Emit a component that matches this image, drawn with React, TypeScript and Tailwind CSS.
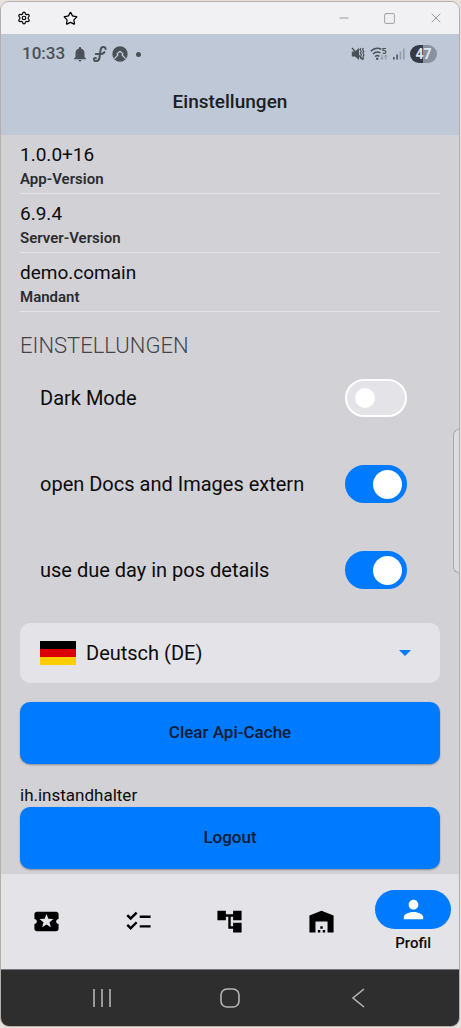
import { useState } from "react";
import { Minus, Settings, Square, Star, X } from "lucide-react";
import {
  MdAccountTree,
  MdChecklist,
  MdLocalActivity,
  MdNotifications,
  MdPerson,
  MdWarehouse,
} from "react-icons/md";

const infos = [
  { value: "1.0.0+16", label: "App-Version" },
  { value: "6.9.4", label: "Server-Version" },
  { value: "demo.comain", label: "Mandant" },
];

const options = [
  { id: "dark-mode", label: "Dark Mode", enabled: false },
  { id: "open-extern", label: "open Docs and Images extern", enabled: true },
  { id: "due-day", label: "use due day in pos details", enabled: true },
];

const tabs = [
  { name: "Tickets", icon: MdLocalActivity },
  { name: "Aufgaben", icon: MdChecklist },
  { name: "Struktur", icon: MdAccountTree },
  { name: "Lager", icon: MdWarehouse },
  { name: "Profil", icon: MdPerson },
];

function TitleBar() {
  return (
    <div className="flex h-8 items-center justify-between bg-[#f1f0f2] pr-[15px] pl-4">
      <div className="flex items-center gap-8 text-black">
        <button aria-label="Settings">
          <Settings size={14} strokeWidth={2} />
        </button>
        <button aria-label="Favorite">
          <Star size={15} strokeWidth={2} />
        </button>
      </div>
      <div className="flex items-center gap-8 text-[#99979a]">
        <button aria-label="Minimize">
          <Minus size={14} strokeWidth={1.7} />
        </button>
        <button aria-label="Maximize">
          <Square size={13} strokeWidth={1.7} />
        </button>
        <button aria-label="Close">
          <X size={16} strokeWidth={1.5} />
        </button>
      </div>
    </div>
  );
}

function StatusBar() {
  return (
    <div className="flex h-10 items-center justify-between pr-[22px] pl-[21px] text-[#4a5157]">
      <div className="flex items-center">
        <span className="text-[17px] font-medium">10:33</span>
        <MdNotifications size={18} className="ml-1.5" />
        <svg width="16" height="18" viewBox="0 0 16 18" className="ml-[3px]" fill="none" stroke="currentColor" strokeWidth="2" strokeLinecap="round">
          <path d="M13.6 4C13.3 1.4 9.2 1.2 8.6 4.8L7.4 13c-.5 3.6-4.6 3.8-5.4 1.8-.4-1.3.7-2.3 1.9-1.7" />
          <path d="M3.8 8.9h5c2 0 3.2-.7 3.6-1.8" />
        </svg>
        <svg width="16" height="16" viewBox="0 0 16 16" className="ml-1">
          <circle cx="8" cy="8" r="7.7" fill="currentColor" />
          <path d="M2.4 12.6L5.8 9.2 5.2 7.6 8 5.4l2.8 2.2-.6 1.6 3.4 3.4" fill="none" stroke="#bfc8d7" strokeWidth="1.3" />
          <path d="M4.4 13.8L8 9.8l3.6 4L8 15.5z" fill="currentColor" />
        </svg>
        <span className="ml-2 size-[5px] rounded-full bg-current" />
      </div>
      <div className="flex items-center gap-[5px]">
        <svg width="14" height="14" viewBox="0 0 14 14" fill="none" stroke="currentColor">
          <path d="M.8 4.5H4L8 1v12L4 9.5H.8z" fill="currentColor" stroke="none" />
          <path d="M1 1l11 12" strokeWidth="1.3" />
          <path d="M10 1l-1 1.5 1.3 2L9.4 6l1 2-1 2 .8 2M12.5 1l-1 1.5 1.3 2-.9 1.5 1 2-1 2 .8 2" strokeWidth="1.2" />
        </svg>
        <svg width="18" height="14" viewBox="0 0 18 14" fill="none" stroke="currentColor">
          <path d="M.8 4.3C3.7 1.3 8 .7 11.4 2.3M3 7c2-2 5-2.4 7.4-1.1M5.2 9.6c1.2-1.2 3-1.2 4.2-.2" strokeWidth="1.5" />
          <circle cx="7.2" cy="11.8" r="1.2" fill="currentColor" stroke="none" />
          <path d="M16 1.5h-3v2h1.4c2 0 2 2.8 0 2.8H12.8" strokeWidth="1.2" />
          <path d="M12 7.8v4.4m-1.4-1.4L12 12.3l1.4-1.5M15.8 12.5V8.2m-1.4 1.4l1.4-1.5 1.4 1.5" stroke="#8b929f" />
        </svg>
        <svg width="12" height="14" viewBox="0 0 12 14" fill="currentColor">
          <path d="M0 10h1.6v2.6H0zM3.3 7.5h1.6v5.1H3.3z" />
          <path d="M6.6 4.6h1.6v8H6.6zM10 1.5h1.6v11.1H10z" fill="#929aa8" />
        </svg>
        <span className="flex h-[18px] w-[27px] items-center justify-center rounded-full bg-linear-to-r from-[#363a42] from-47% to-[#8991a0] to-47% text-sm font-bold text-[#dde4ee]">
          47
        </span>
      </div>
    </div>
  );
}

function Toggle({ id, label, enabled }: { id: string; label: string; enabled: boolean }) {
  const [checked, setChecked] = useState(enabled);

  return (
    <div className="flex h-[86px] items-center justify-between pr-[33px] pl-5">
      <label htmlFor={id} className="text-xl">
        {label}
      </label>
      <input
        id={id}
        type="checkbox"
        role="switch"
        checked={checked}
        onChange={() => setChecked(!checked)}
        className="flex h-[38px] w-[62px] shrink-0 appearance-none items-center rounded-full border-2 border-white bg-[#e4e3e8] px-2 before:size-5 before:rounded-full before:bg-white checked:justify-end checked:border-[#007aff] checked:bg-[#007aff] checked:px-[3px] checked:before:size-[29px]"
      />
    </div>
  );
}

function LanguageSelect() {
  return (
    <div className="mt-2.5 flex h-[60px] items-center rounded-[10px] bg-[#e4e3e8] pr-[29px] pl-5">
      <svg width="36" height="24" viewBox="0 0 36 24" aria-hidden="true">
        <path d="M0 0h36v8H0z" fill="#000" />
        <path d="M0 8h36v8H0z" fill="#dd0000" />
        <path d="M0 16h36v8H0z" fill="#ffce00" />
      </svg>
      <select aria-label="Sprache" className="ml-2.5 h-full flex-1 appearance-none text-xl">
        <option>Deutsch (DE)</option>
        <option>English (EN)</option>
      </select>
      <svg width="12" height="6" viewBox="0 0 12 6" aria-hidden="true">
        <path d="M0 0h12L6 6z" fill="#007aff" />
      </svg>
    </div>
  );
}

function ActionButton({ children }: { children: string }) {
  return (
    <button className="h-[62px] w-full rounded-[10px] bg-[#007aff] text-[17px] font-medium text-[#0a1c33] shadow-[0_1px_2px_rgba(0,0,0,0.35)]">
      {children}
    </button>
  );
}

function TabBar() {
  const [active, setActive] = useState("Profil");

  return (
    <nav className="grid h-[95px] grid-cols-5 items-center bg-[#e4e3e8]">
      {tabs.map(({ name, icon: Icon }) => (
        <button
          key={name}
          aria-label={name}
          onClick={() => setActive(name)}
          className="flex flex-col items-center"
        >
          <span
            className={`flex h-[39px] w-[76px] items-center justify-center rounded-full ${
              name === active ? "bg-[#007aff] text-white" : "text-black"
            }`}
          >
            <Icon size={29} />
          </span>
          {name === active && (
            <span className="mt-1 text-[15px] leading-5 font-medium">{name}</span>
          )}
        </button>
      ))}
    </nav>
  );
}

function SystemBar() {
  return (
    <div className="grid h-[57px] grid-cols-3 items-center justify-items-center border-t border-[#75797d] bg-[#2e2e2e] px-[37px] text-[#b5b5b5]">
      <button aria-label="Recents">
        <svg width="20" height="20" viewBox="0 0 20 20" stroke="currentColor" strokeWidth="1.6">
          <path d="M2 1v18M10 1v18M18 1v18" />
        </svg>
      </button>
      <button aria-label="Home">
        <svg width="20" height="20" viewBox="0 0 20 20" fill="none" stroke="currentColor" strokeWidth="1.6">
          <rect x="1" y="1" width="18" height="18" rx="6" />
        </svg>
      </button>
      <button aria-label="Back">
        <svg width="14" height="20" viewBox="0 0 14 20" fill="none" stroke="currentColor" strokeWidth="1.6">
          <path d="M13 1L2 10l11 9" />
        </svg>
      </button>
    </div>
  );
}

export default function App() {
  return (
    <div className="min-h-screen bg-[#e9e1dc] pt-px pr-px font-[Roboto,sans-serif] text-[#0b0b0c]">
      <div className="relative overflow-hidden rounded-[9px] border border-[#b5afac] bg-[#d2d1d6]">
        <TitleBar />
        <header className="bg-[#bfc8d7] pb-[5px]">
          <StatusBar />
          <h1 className="flex h-14 items-center justify-center text-[19px] font-medium text-[#1b2023]">
            Einstellungen
          </h1>
        </header>

        <main className="px-[19px] pb-[5px]">
          <dl>
            {infos.map(info => (
              <div key={info.label} className="flex flex-col-reverse border-b border-[#e4e3e8] pt-2 pb-0.5">
                <dt className="text-[15px] leading-6 font-semibold text-[#2c2c2e]">
                  {info.label}
                </dt>
                <dd className="text-[19px] leading-6">{info.value}</dd>
              </div>
            ))}
          </dl>

          <h2 className="mt-[25px] text-[22px] leading-[18px] font-light text-[#444448]">
            EINSTELLUNGEN
          </h2>
          {options.map(option => (
            <Toggle key={option.id} {...option} />
          ))}

          <LanguageSelect />
          <div className="mt-[19px]">
            <ActionButton>Clear Api-Cache</ActionButton>
          </div>
          <p className="mt-5 text-[17px] leading-[23px]">ih.instandhalter</p>
          <ActionButton>Logout</ActionButton>
        </main>

        <TabBar />
        <SystemBar />

        {/* edge panel handle */}
        <div className="absolute top-[427px] right-0 h-36 w-1.5 rounded-l-md border border-r-0 border-[#a9a8ac] bg-[#dddce0]" />
      </div>
    </div>
  );
}
